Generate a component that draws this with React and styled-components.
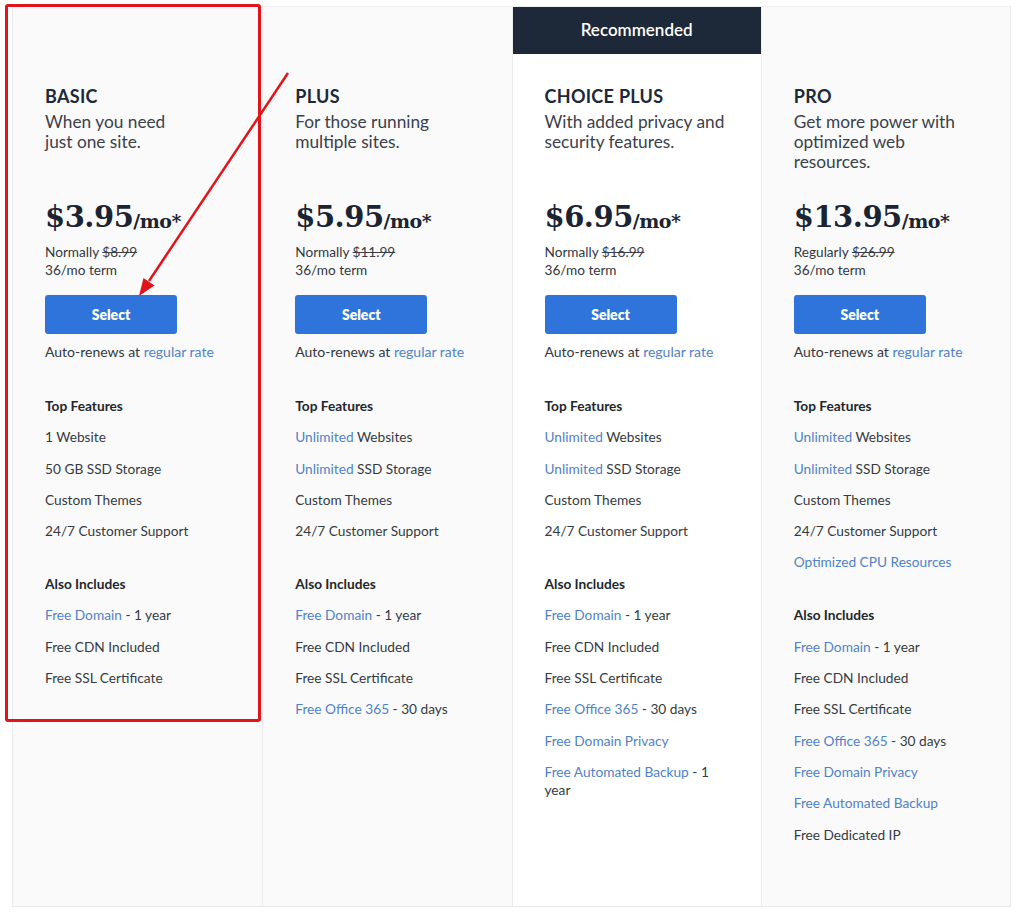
import styled, { createGlobalStyle } from "styled-components";

const GlobalStyle = createGlobalStyle`
  body {
    margin: 0;
    background: #ffffff;
    font-family: Lato, "Liberation Sans", sans-serif;
  }
`;

const Page = styled.div`
  position: relative;
  width: 1024px;
  height: 917px;
  padding: 6px 0 0 12px;
  box-sizing: border-box;
`;

const Table = styled.div`
  width: 999px;
  height: 901px;
  display: grid;
  grid-template-columns: repeat(4, 1fr);
  border: 1px solid #e9e9e9;
  border-top-color: #eeeeee;
  box-sizing: border-box;
`;

const Column = styled.div`
  display: flex;
  flex-direction: column;
  background: ${(p) => (p.$featured ? "#ffffff" : "#fafafa")};
  border-left: ${(p) => (p.$first ? "none" : "1px solid #ececec")};
`;

const Banner = styled.div`
  height: 47px;
  flex: none;
  display: flex;
  align-items: center;
  justify-content: center;
  padding-bottom: 2px;
  box-sizing: border-box;
  background: ${(p) => (p.$show ? "#1d2838" : "transparent")};
  color: #ffffff;
  font-size: 17px;
  font-weight: 600;
`;

const Body = styled.div`
  padding: 31px 16px 0 32px;
  display: flex;
  flex-direction: column;
`;

const Name = styled.h2`
  margin: 0;
  font-size: 18px;
  line-height: 22px;
  font-weight: 700;
  color: #1d2838;
  letter-spacing: 0.3px;
`;

const Desc = styled.p`
  margin: 5px 0 0;
  min-height: 60px;
  font-size: 17.3px;
  line-height: 20px;
  color: #3b414b;
`;

const Price = styled.div`
  margin-top: 25px;
  height: 40px;
  display: flex;
  align-items: center;
  font-family: "DejaVu Serif", "Liberation Serif", serif;
  font-weight: 700;
  color: #1b2433;
  font-size: 29px;
  letter-spacing: -0.5px;
`;

const Per = styled.span`
  font-size: 19px;
  margin-top: 7px;
`;

const Small = styled.div`
  margin-top: 6px;
  font-size: 13.6px;
  line-height: 18px;
  color: #333840;
`;

const Struck = styled.s`
  color: #3a3f47;
`;

const SelectButton = styled.button`
  margin-top: 16px;
  width: 132px;
  height: 39px;
  border: none;
  border-radius: 3px;
  background: #2e74da;
  color: #ffffff;
  font-family: inherit;
  font-size: 14px;
  font-weight: 800;
  cursor: pointer;
`;

const Renew = styled.div`
  margin-top: 8px;
  font-size: 14px;
  line-height: 20px;
  color: #33383f;
`;

const Link = styled.span`
  color: #4f82c8;
`;

const Section = styled.ul`
  list-style: none;
  margin: 35px 0 0;
  padding: 0;
  display: flex;
  flex-direction: column;
  gap: 13.3px;
`;

const SectionTitle = styled.li`
  font-size: 13.7px;
  line-height: 18px;
  font-weight: 700;
  color: #23272d;
`;

const Item = styled.li`
  width: 180px;
  font-size: 13.7px;
  line-height: 18px;
  color: #363b42;
`;

const Overlay = styled.svg`
  position: absolute;
  left: 0;
  top: 0;
  pointer-events: none;
`;

const plans = [
  {
    name: "BASIC",
    desc: ["When you need", "just one site."],
    price: "$3.95",
    was: ["Normally", "$8.99"],
    top: [
      [null, "1 Website"],
      [null, "50 GB SSD Storage"],
      [null, "Custom Themes"],
      [null, "24/7 Customer Support"],
    ],
    also: [
      ["Free Domain", " - 1 year"],
      [null, "Free CDN Included"],
      [null, "Free SSL Certificate"],
    ],
  },
  {
    name: "PLUS",
    desc: ["For those running", "multiple sites."],
    price: "$5.95",
    was: ["Normally", "$11.99"],
    top: [
      ["Unlimited", " Websites"],
      ["Unlimited", " SSD Storage"],
      [null, "Custom Themes"],
      [null, "24/7 Customer Support"],
    ],
    also: [
      ["Free Domain", " - 1 year"],
      [null, "Free CDN Included"],
      [null, "Free SSL Certificate"],
      ["Free Office 365", " - 30 days"],
    ],
  },
  {
    name: "CHOICE PLUS",
    featured: true,
    desc: ["With added privacy and", "security features."],
    price: "$6.95",
    was: ["Normally", "$16.99"],
    top: [
      ["Unlimited", " Websites"],
      ["Unlimited", " SSD Storage"],
      [null, "Custom Themes"],
      [null, "24/7 Customer Support"],
    ],
    also: [
      ["Free Domain", " - 1 year"],
      [null, "Free CDN Included"],
      [null, "Free SSL Certificate"],
      ["Free Office 365", " - 30 days"],
      ["Free Domain Privacy", ""],
      ["Free Automated Backup", " - 1 year"],
    ],
  },
  {
    name: "PRO",
    desc: ["Get more power with", "optimized web", "resources."],
    price: "$13.95",
    was: ["Regularly", "$26.99"],
    top: [
      ["Unlimited", " Websites"],
      ["Unlimited", " SSD Storage"],
      [null, "Custom Themes"],
      [null, "24/7 Customer Support"],
      ["Optimized CPU Resources", ""],
    ],
    also: [
      ["Free Domain", " - 1 year"],
      [null, "Free CDN Included"],
      [null, "Free SSL Certificate"],
      ["Free Office 365", " - 30 days"],
      ["Free Domain Privacy", ""],
      ["Free Automated Backup", ""],
      [null, "Free Dedicated IP"],
    ],
  },
];

const Feature = ({ link, text }) => (
  <Item>
    {link && <Link>{link}</Link>}
    {text}
  </Item>
);

const Plan = ({ plan, first }) => (
  <Column $featured={plan.featured} $first={first}>
    <Banner $show={plan.featured}>{plan.featured ? "Recommended" : ""}</Banner>
    <Body>
      <Name>{plan.name}</Name>
      <Desc>
        {plan.desc.map((line, i) => (
          <span key={line}>
            {i > 0 && <br />}
            {line}
          </span>
        ))}
      </Desc>
      <Price>
        {plan.price}
        <Per>/mo*</Per>
      </Price>
      <Small>
        {plan.was[0]} <Struck>{plan.was[1]}</Struck>
        <br />
        36/mo term
      </Small>
      <SelectButton>Select</SelectButton>
      <Renew>
        Auto-renews at <Link>regular rate</Link>
      </Renew>
      <Section>
        <SectionTitle>Top Features</SectionTitle>
        {plan.top.map(([l, t]) => (
          <Feature key={(l || "") + t} link={l} text={t} />
        ))}
      </Section>
      <Section>
        <SectionTitle>Also Includes</SectionTitle>
        {plan.also.map(([l, t]) => (
          <Feature key={(l || "") + t} link={l} text={t} />
        ))}
      </Section>
    </Body>
  </Column>
);

// red annotation drawn on top of the screenshot
const Annotation = () => (
  <Overlay width="1024" height="917" viewBox="0 0 1024 917">
    <rect x="6.5" y="5.5" width="253" height="715" rx="1.5" fill="none" stroke="#e0151c" strokeWidth="3" />
    <line x1="288" y1="73" x2="149" y2="281" stroke="#e0151c" strokeWidth="2.5" />
    <polygon points="139,296 154.5,285.5 143.5,278" fill="#e0151c" />
  </Overlay>
);

export default function App() {
  return (
    <>
      <GlobalStyle />
      <Page>
        <Table>
          {plans.map((p, i) => (
            <Plan key={p.name} plan={p} first={i === 0} />
          ))}
        </Table>
        <Annotation />
      </Page>
    </>
  );
}
